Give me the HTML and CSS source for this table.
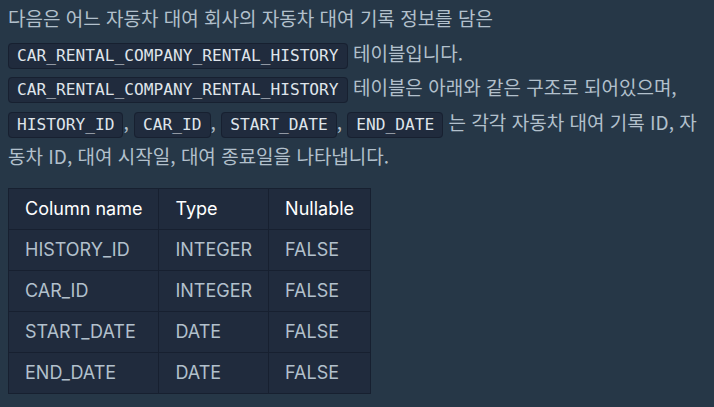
FILE: index.html
```html
<!DOCTYPE html>
<html lang="ko">
<head>
<meta charset="utf-8">
<link rel="stylesheet" href="styles.css">
</head>
<body>
<div class="markdown">
<p>다음은 어느 자동차 대여 회사의 자동차 대여 기록 정보를 담은 <code>CAR_RENTAL_COMPANY_RENTAL_HISTORY</code> 테이블입니다. <code>CAR_RENTAL_COMPANY_RENTAL_HISTORY</code> 테이블은 아래와 같은 구조로 되어있으며, <code>HISTORY_ID</code>, <code>CAR_ID</code>, <code>START_DATE</code>, <code>END_DATE</code> 는 각각 자동차 대여 기록 ID, 자동차 ID, 대여 시작일, 대여 종료일을 나타냅니다.</p>
<table class="schema">
<thead>
<tr><th>Column name</th><th>Type</th><th>Nullable</th></tr>
</thead>
<tbody>
<tr><td>HISTORY_ID</td><td>INTEGER</td><td>FALSE</td></tr>
<tr><td>CAR_ID</td><td>INTEGER</td><td>FALSE</td></tr>
<tr><td>START_DATE</td><td>DATE</td><td>FALSE</td></tr>
<tr><td>END_DATE</td><td>DATE</td><td>FALSE</td></tr>
</tbody>
</table>
</div>
</body>
</html>
```
FILE: styles.css
```css
html, body {
  margin: 0;
  background: #263747;
}
body {
  padding: 1px 8px 0 8px;
  color: #b2c0cc;
  font-family: "Noto Sans CJK KR", "Noto Sans", sans-serif;
  font-size: 19px;
}
.markdown p {
  margin: 0 0 14px 0;
  line-height: 34.5px;
}
.markdown code {
  font-family: "DejaVu Sans Mono", monospace;
  font-size: 16.2px;
  line-height: 1;
  color: #dfe4ea;
  background: #202b3d;
  border: 1px solid #172030;
  border-radius: 4px;
  padding: 2px 8px 3px 8px;
}
.schema {
  border-collapse: collapse;
  background: #202b3d;
  font-family: Inter, "Noto Sans CJK KR", sans-serif;
  font-size: 18px;
}
.schema th,
.schema td {
  border: 1px solid #172030;
  padding: 0 16px;
  height: 40px;
  text-align: left;
}
.schema th {
  color: #ffffff;
  font-weight: 400;
}
```
